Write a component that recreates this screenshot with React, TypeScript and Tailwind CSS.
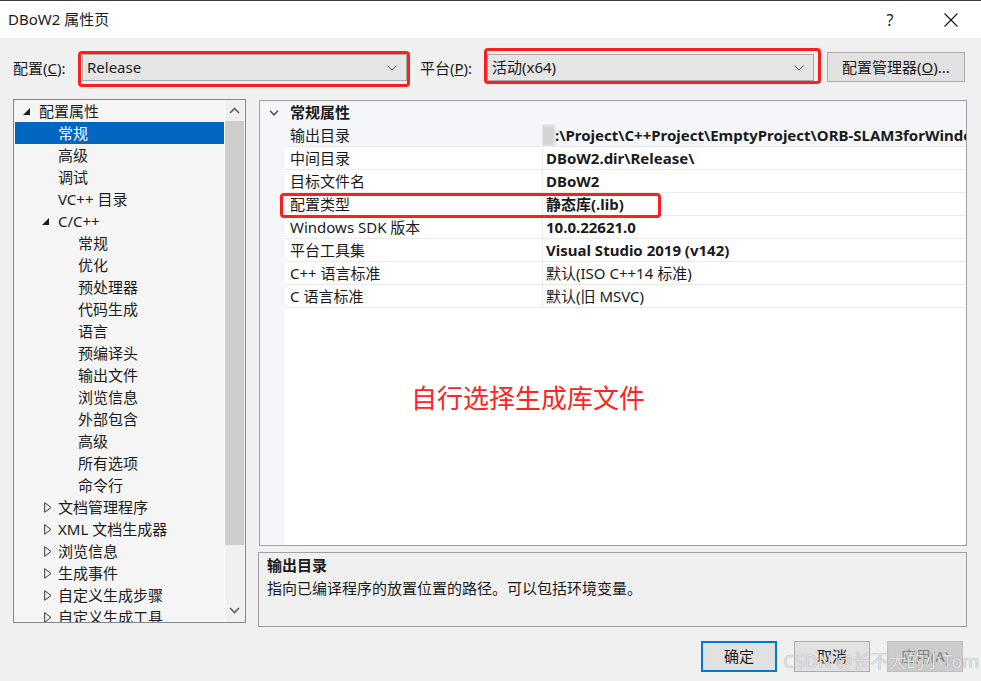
import React from 'react';

type TreeItem = { label: string; level: 0 | 1 | 2; glyph?: 'open' | 'closed'; selected?: boolean };

const treeItems: TreeItem[] = [
  { label: '配置属性', level: 0, glyph: 'open' },
  { label: '常规', level: 1, selected: true },
  { label: '高级', level: 1 },
  { label: '调试', level: 1 },
  { label: 'VC++ 目录', level: 1 },
  { label: 'C/C++', level: 1, glyph: 'open' },
  { label: '常规', level: 2 },
  { label: '优化', level: 2 },
  { label: '预处理器', level: 2 },
  { label: '代码生成', level: 2 },
  { label: '语言', level: 2 },
  { label: '预编译头', level: 2 },
  { label: '输出文件', level: 2 },
  { label: '浏览信息', level: 2 },
  { label: '外部包含', level: 2 },
  { label: '高级', level: 2 },
  { label: '所有选项', level: 2 },
  { label: '命令行', level: 2 },
  { label: '文档管理程序', level: 1, glyph: 'closed' },
  { label: 'XML 文档生成器', level: 1, glyph: 'closed' },
  { label: '浏览信息', level: 1, glyph: 'closed' },
  { label: '生成事件', level: 1, glyph: 'closed' },
  { label: '自定义生成步骤', level: 1, glyph: 'closed' },
  { label: '自定义生成工具', level: 1, glyph: 'closed' },
];

const props = [
  { name: '输出目录', value: ':\\Project\\C++Project\\EmptyProject\\ORB-SLAM3forWindows\\Thirdparty', bold: true, selected: true, smudge: true },
  { name: '中间目录', value: 'DBoW2.dir\\Release\\', bold: true },
  { name: '目标文件名', value: 'DBoW2', bold: true },
  { name: '配置类型', value: '静态库(.lib)', bold: true },
  { name: 'Windows SDK 版本', value: '10.0.22621.0', bold: true },
  { name: '平台工具集', value: 'Visual Studio 2019 (v142)', bold: true },
  { name: 'C++ 语言标准', value: '默认(ISO C++14 标准)', bold: false },
  { name: 'C 语言标准', value: '默认(旧 MSVC)', bold: false },
];

const indent = ['pl-[6px]', 'pl-[25px]', 'pl-[45px]'];

function Chevron({ up }: { up?: boolean }) {
  return (
    <svg width="11" height="7" viewBox="0 0 11 7">
      <polyline
        points={up ? '1,6 5.5,1.5 10,6' : '1,1 5.5,5.5 10,1'}
        fill="none"
        stroke="#606060"
        strokeWidth="1.6"
      />
    </svg>
  );
}

function SelectBox({ text }: { text: string }) {
  return (
    <div className="h-[27px] flex-1 flex items-center justify-between bg-[#e5e5e5] border border-[#a9a9a9] pl-[4px] pr-[9px]">
      <span>{text}</span>
      <svg width="10" height="6" viewBox="0 0 10 6">
        <polyline points="0.5,0.5 5,5 9.5,0.5" fill="none" stroke="#555" strokeWidth="1" />
      </svg>
    </div>
  );
}

export default function App() {
  return (
    <div className="w-[981px] h-[681px] bg-[#f0f0f0] border-t border-[#3a3a3a] flex flex-col overflow-hidden relative text-[15px] text-[#1a1a1a] font-[family-name:'Noto_Sans','Noto_Sans_CJK_SC',sans-serif]">
      {/* title bar */}
      <div className="h-[37px] bg-white flex items-center justify-between pl-[8px]">
        <span>DBoW2 属性页</span>
        <div className="flex items-center h-full">
          <span className="w-[14px] text-center text-[16px]">?</span>
          <div className="w-[84px] flex justify-end pr-[23px]">
            <svg width="14" height="14" viewBox="0 0 14 14">
              <path d="M0.5 0.5 L13.5 13.5 M13.5 0.5 L0.5 13.5" stroke="#111" strokeWidth="1.1" />
            </svg>
          </div>
        </div>
      </div>

      <div className="flex-1 flex flex-col px-[13px]">
        {/* config row */}
        <div className="mt-[10px] h-[38px] flex items-start">
          <div className="h-[40px] w-[65px] flex items-center">
            配置(<span className="underline">C</span>):
          </div>
          <div className="mt-[3px] h-[36px] w-[332px] border-[3px] border-[#ff1e1e] rounded-[4px] pl-[1px] flex items-start">
            <SelectBox text="Release" />
          </div>
          <div className="h-[40px] w-[64px] ml-[10px] flex items-center">
            平台(<span className="underline">P</span>):
          </div>
          <div className="h-[36px] w-[337px] border-[3px] border-[#ff1e1e] rounded-[4px] pl-[0px] pr-[4px] pt-[3px] flex items-start">
            <SelectBox text="活动(x64)" />
          </div>
          <button className="ml-[6px] mt-[4px] h-[30px] w-[138px] bg-[#e1e1e1] border border-[#adadad]">
            配置管理器(<span className="underline">O</span>)...
          </button>
        </div>

        {/* main area */}
        <div className="mt-[13px] flex">
          {/* tree */}
          <div className="w-[233px] h-[524px] border border-[#828790] bg-[#f5f5f5] flex">
            <div className="flex-1 overflow-hidden pl-[1px]">
              {treeItems.map((it, i) => (
                <div
                  key={i}
                  className={`h-[22px] flex items-center whitespace-nowrap ${indent[it.level]} ${
                    it.selected ? 'bg-[#0067c0] text-white' : ''
                  }`}
                >
                  <div className="w-[18px] flex items-center">
                    {it.glyph === 'open' && (
                      <svg width="7" height="7" viewBox="0 0 7 7" className="ml-[2px]">
                        <polygon points="7,0 7,7 0,7" fill="#1e1e1e" />
                      </svg>
                    )}
                    {it.glyph === 'closed' && (
                      <svg width="8" height="11" viewBox="0 0 8 11" className="ml-[4px]">
                        <polygon points="0.7,0.7 7,5.5 0.7,10.3" fill="none" stroke="#333" strokeWidth="1" />
                      </svg>
                    )}
                  </div>
                  <span>{it.label}</span>
                </div>
              ))}
            </div>
            <div className="w-[20px] bg-[#f0f0f0] border-l border-white flex flex-col items-center mr-[1px]">
              <div className="h-[21px] flex items-center justify-center">
                <Chevron up />
              </div>
              <div className="w-full h-[424px] bg-[#cdcdcd]" />
              <div className="flex-1 flex items-end pb-[8px]">
                <Chevron />
              </div>
            </div>
          </div>

          {/* right column */}
          <div className="ml-[13px] w-[708px] flex flex-col">
            <div className="mt-[1px] h-[446px] border border-[#a0a0a0] bg-white relative flex flex-col">
              <div className="h-[23px] bg-[#f4f6fa] flex items-center">
                <div className="w-[25px] flex justify-center pl-[2px]">
                  <svg width="10" height="6" viewBox="0 0 10 6">
                    <polyline points="1,0.8 5,4.8 9,0.8" fill="none" stroke="#555" strokeWidth="1.6" />
                  </svg>
                </div>
                <span className="font-bold pl-[5px]">常规属性</span>
              </div>
              {props.map((p, i) => (
                <div key={i} className={`h-[23px] flex ${p.selected ? 'bg-[#f4f6fa]' : ''}`}>
                  <div className="w-[25px] bg-[#f4f6fa]" />
                  <div className="w-[258px] pl-[5px] flex items-center border-r border-b border-[#ebebeb] whitespace-nowrap">
                    {p.name}
                  </div>
                  <div
                    className={`flex-1 flex items-center pl-[3px] border-b border-[#ebebeb] whitespace-nowrap overflow-hidden ${
                      p.bold ? 'font-bold' : ''
                    }`}
                  >
                    {p.smudge && <span className="ml-[-8px] w-[17px] h-[21px] bg-[#d4d4d4] blur-[1.5px] shrink-0" />}
                    <span>{p.value}</span>
                  </div>
                </div>
              ))}
              <div className="flex-1 bg-white flex">
                <div className="w-[25px] bg-[#f4f6fa]" />
                <div className="pl-[126px] pt-[72px] text-[26px] leading-[36px] text-[#ff2323]">自行选择生成库文件</div>
              </div>
              {/* highlight on 配置类型 */}
              <div className="absolute left-[20px] top-[92px] w-[381px] h-[25px] border-[3px] border-[#ff1e1e] rounded-[4px]" />
            </div>

            <div className="mt-[6px] h-[75px] border border-[#a0a0a0] bg-[#f0f0f0] px-[8px] pt-[1px] -ml-[1px]">
              <div className="font-bold leading-[22px]">输出目录</div>
              <div className="leading-[22px] mt-[1px]">指向已编译程序的放置位置的路径。可以包括环境变量。</div>
            </div>
          </div>
        </div>

        {/* buttons */}
        <div className="mt-[14px] flex justify-end gap-[17px] pr-[5px]">
          <button className="w-[76px] h-[31px] bg-[#e1e1e1] border-2 border-[#0078d7]">确定</button>
          <button className="w-[76px] h-[31px] bg-[#e1e1e1] border border-[#adadad]">取消</button>
          <button className="w-[76px] h-[31px] bg-[#cccccc] border border-[#bfbfbf] text-[#838383]">应用(A)</button>
        </div>
      </div>

      {/* watermark */}
      <div className="absolute right-[2px] bottom-[6px] text-[18px] text-[#ececec]/90 [text-shadow:0_0_1px_#8a8a8a] whitespace-nowrap">
        CSDN @长不大的小Tom
      </div>
    </div>
  );
}
